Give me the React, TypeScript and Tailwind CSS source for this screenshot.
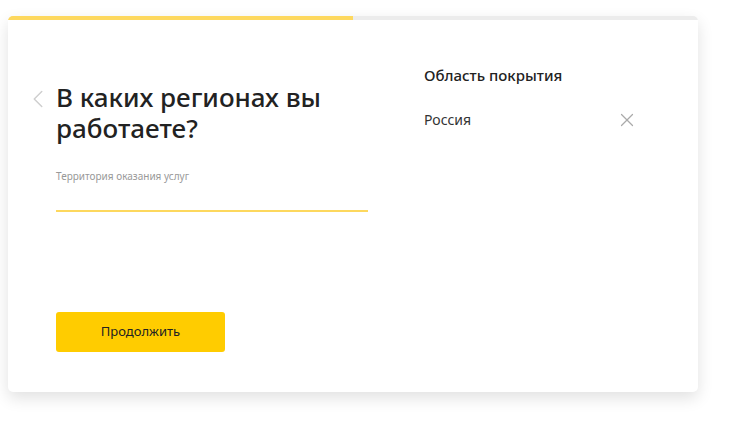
import { ChevronLeft, X } from 'lucide-react';

export default function App() {
  return (
    <div className="w-[737px] h-[427px] bg-white pt-4 pl-2 font-['Noto_Sans',sans-serif]">
      <div className="w-[690px] h-[376px] bg-white rounded-[5px] overflow-hidden shadow-[0_6px_16px_rgba(0,0,0,0.12)] flex flex-col">
        {/* Progress */}
        <div className="h-[4px] bg-[#ececec] flex">
          <div className="w-1/2 bg-[#fdd85e]" />
        </div>

        <div className="flex flex-1">
          {/* Left column */}
          <div className="relative w-[368px] pl-12 pt-[62px] flex flex-col">
            <ChevronLeft
              className="absolute left-[15px] top-[64px] w-[30px] h-[30px] text-[#cfcfcf]"
              strokeWidth={1.2}
            />
            <h1 className="text-[26px] leading-[31px] font-medium text-[#222] font-['Noto_Sans',sans-serif]">
              В каких регионах вы
              <br />
              работаете?
            </h1>
            <div className="mt-[25px] text-[10px] text-[#999]">Территория оказания услуг</div>
            <div className="mt-[26px] h-[2px] w-[312px] bg-[#fdd85e]" />
            <button className="mt-[100px] w-[169px] h-10 rounded-[3px] bg-[#ffcc00] text-[13px] text-[#222]">
              Продолжить
            </button>
          </div>

          {/* Right column */}
          <div className="pl-12 pt-[44px] w-[264px]">
            <div className="text-[15px] font-medium text-[#222]">Область покрытия</div>
            <div className="mt-[22px] flex items-center justify-between">
              <span className="text-[14px] text-[#333]">Россия</span>
              <X className="w-[22px] h-[22px] mr-[2px] text-[#aaa]" strokeWidth={1.3} />
            </div>
          </div>
        </div>
      </div>
    </div>
  );
}
